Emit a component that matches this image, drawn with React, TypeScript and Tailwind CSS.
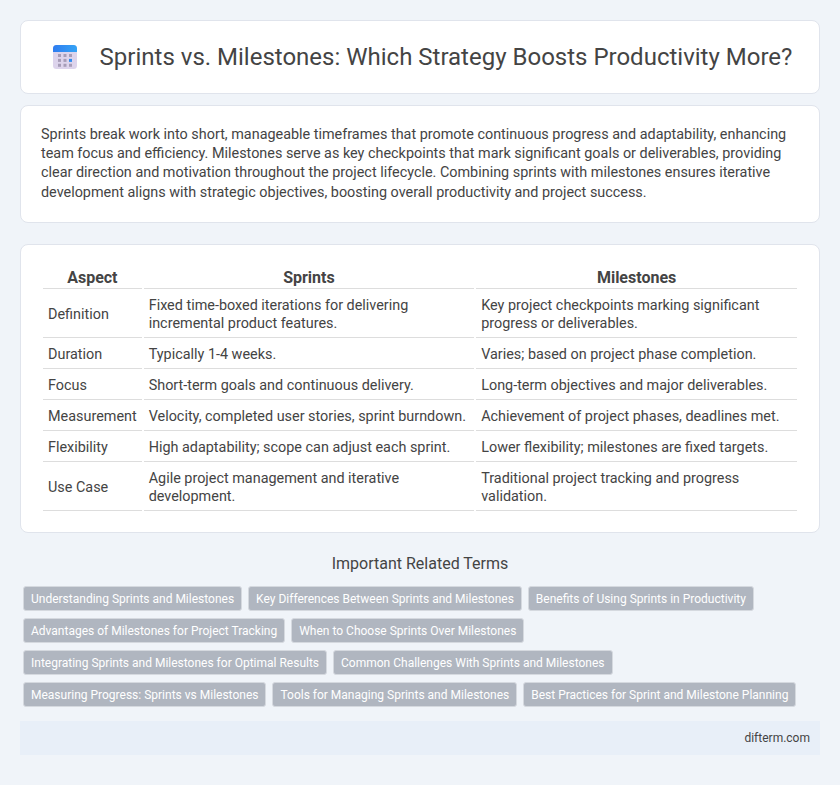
const rows = [
  ["Definition", "Fixed time-boxed iterations for delivering incremental product features.", "Key project checkpoints marking significant progress or deliverables."],
  ["Duration", "Typically 1-4 weeks.", "Varies; based on project phase completion."],
  ["Focus", "Short-term goals and continuous delivery.", "Long-term objectives and major deliverables."],
  ["Measurement", "Velocity, completed user stories, sprint burndown.", "Achievement of project phases, deadlines met."],
  ["Flexibility", "High adaptability; scope can adjust each sprint.", "Lower flexibility; milestones are fixed targets."],
  ["Use Case", "Agile project management and iterative development.", "Traditional project tracking and progress validation."],
];

const terms = [
  "Understanding Sprints and Milestones",
  "Key Differences Between Sprints and Milestones",
  "Benefits of Using Sprints in Productivity",
  "Advantages of Milestones for Project Tracking",
  "When to Choose Sprints Over Milestones",
  "Integrating Sprints and Milestones for Optimal Results",
  "Common Challenges With Sprints and Milestones",
  "Measuring Progress: Sprints vs Milestones",
  "Tools for Managing Sprints and Milestones",
  "Best Practices for Sprint and Milestone Planning",
];

function CalendarIcon() {
  const cells = [
    [0, 0], [1, 0], [2, 0],
    [0, 1], [1, 1], [2, 1],
    [0, 2], [1, 2], [2, 2],
  ];
  return (
    <svg width="24" height="24" viewBox="0 0 24 24" className="shrink-0">
      <defs>
        <linearGradient id="cal-top" x1="0" y1="0" x2="1" y2="0">
          <stop offset="0" stopColor="#2f7cf0" />
          <stop offset="1" stopColor="#35a4f5" />
        </linearGradient>
      </defs>
      <rect x="0" y="0" width="24" height="24" rx="3.5" fill="#ddd4ec" />
      <path d="M0 7V3.500A3.500 3.500 0 0 1 3.500 0h17A3.500 3.500 0 0 1 24 3.500V7z" fill="url(#cal-top)" />
      {cells.map(([c, r]) => (
        <rect
          key={`${c}-${r}`}
          x={5 + c * 5.5}
          y={9 + r * 4.9}
          width="3"
          height="3"
          fill={c === 2 && r === 1 ? "#2f8cf0" : "#a79db8"}
        />
      ))}
    </svg>
  );
}

export default function App() {
  return (
    <div className="min-h-[785px] bg-[#f0f4f9] p-5 font-['Roboto',sans-serif] text-[#444]">
      <header className="flex h-[74px] items-center justify-center gap-[23px] rounded-lg border border-[#e0e4ec] bg-white pl-[5px]">
        <CalendarIcon />
        <h1 className="text-[24px] font-normal">Sprints vs. Milestones: Which Strategy Boosts Productivity More?</h1>
      </header>

      <section className="mt-[11px] rounded-lg border border-[#e0e4ec] bg-white px-[20px] pt-[19px] pb-[20px]">
        <p className="text-[14.4px] leading-[19.2px]">
          Sprints break work into short, manageable timeframes that promote continuous progress and adaptability, enhancing team focus and efficiency. Milestones serve as key checkpoints that mark significant goals or deliverables, providing clear direction and motivation throughout the project lifecycle. Combining sprints with milestones ensures iterative development aligns with strategic objectives, boosting overall productivity and project success.
        </p>
      </section>

      <section className="mt-[21px] rounded-lg border border-[#e0e4ec] bg-white px-[20px] pt-[21px] pb-[19px]">
        <table className="w-full border-separate border-spacing-[2px] text-[14.4px] leading-[18px]">
          <thead>
            <tr>
              <th className="border-b border-[#ddd] pt-[1px] pb-[1px] text-[16px] font-bold">Aspect</th>
              <th className="border-b border-[#ddd] pt-[1px] pb-[1px] text-[16px] font-bold">Sprints</th>
              <th className="border-b border-[#ddd] pt-[1px] pb-[1px] text-[16px] font-bold">Milestones</th>
            </tr>
          </thead>
          <tbody>
            {rows.map((row) => (
              <tr key={row[0]}>
                {row.map((cell) => (
                  <td key={cell} className="border-b border-[#ddd] px-[5px] pt-[6px] pb-[4px]">{cell}</td>
                ))}
              </tr>
            ))}
          </tbody>
        </table>
      </section>

      <h2 className="mt-[19px] text-center text-[16px] font-normal">Important Related Terms</h2>
      <div className="mt-[10px] flex flex-wrap gap-x-[6px] gap-y-[7px] px-[3px]">
        {terms.map((t) => (
          <span key={t} className="rounded-[3px] border border-[#d5d9df] bg-[#b0b6c0] px-[7px] pt-[5px] pb-[3px] text-[12px] leading-[15px] text-white">{t}</span>
        ))}
      </div>

      <footer className="mt-[14px] flex h-[34px] items-center justify-end bg-[#e8eff8] px-[10px] pt-[1px] text-[12px]">difterm.com</footer>
    </div>
  );
}
